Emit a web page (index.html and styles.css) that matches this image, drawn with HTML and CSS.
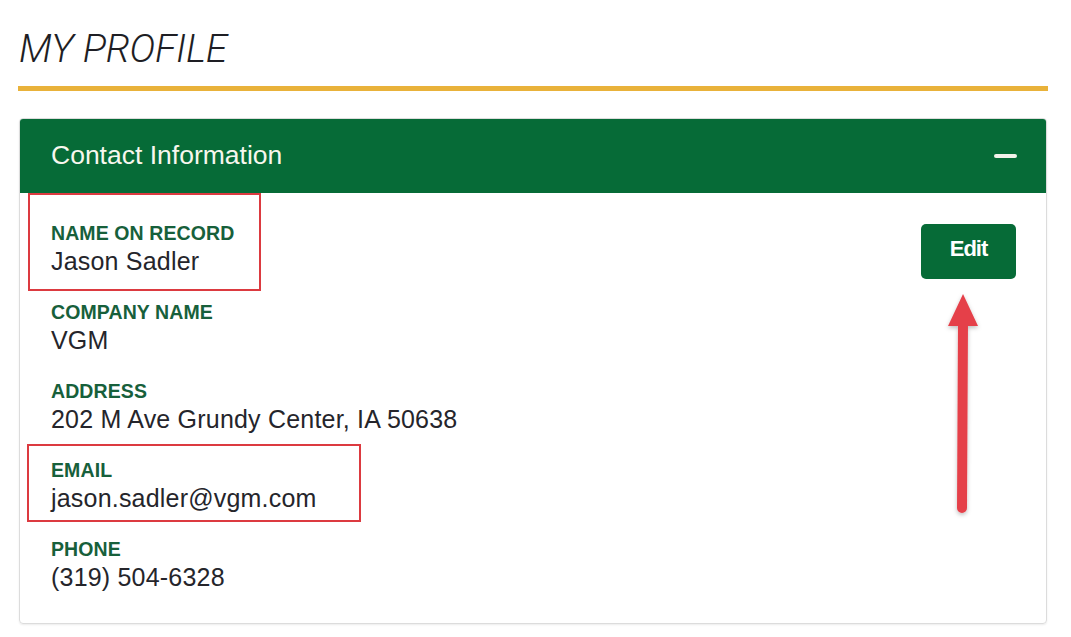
FILE: index.html
```html
<!DOCTYPE html>
<html lang="en">
<head>
<meta charset="utf-8">
<title>My Profile</title>
<link rel="stylesheet" href="styles.css">
</head>
<body>
<main class="page">
  <h1 class="page-title">MY PROFILE</h1>
  <div class="gold-rule"></div>
  <section class="card">
    <header class="card-header">
      <h2 class="card-title">Contact Information</h2>
      <span class="collapse-icon" aria-label="Collapse"></span>
    </header>
    <div class="card-body">
      <dl class="fields">
        <div class="field">
          <dt class="field-label">NAME ON RECORD</dt>
          <dd class="field-value">Jason Sadler</dd>
        </div>
        <div class="field">
          <dt class="field-label">COMPANY NAME</dt>
          <dd class="field-value">VGM</dd>
        </div>
        <div class="field">
          <dt class="field-label">ADDRESS</dt>
          <dd class="field-value">202 M Ave Grundy Center, IA 50638</dd>
        </div>
        <div class="field">
          <dt class="field-label">EMAIL</dt>
          <dd class="field-value">jason.sadler@vgm.com</dd>
        </div>
        <div class="field">
          <dt class="field-label">PHONE</dt>
          <dd class="field-value">(319) 504-6328</dd>
        </div>
      </dl>
      <button class="edit-btn" type="button">Edit</button>
    </div>
  </section>

  <div class="mark mark-name"></div>
  <div class="mark mark-email"></div>
  <svg class="arrow" width="46" height="232" viewBox="0 0 46 232" aria-hidden="true">
    <defs>
      <filter id="sh" x="-50%" y="-10%" width="200%" height="120%">
        <feDropShadow dx="0" dy="2" stdDeviation="2" flood-color="#000" flood-opacity="0.25"/>
      </filter>
    </defs>
    <g filter="url(#sh)">
      <line x1="23" y1="34" x2="22" y2="220" stroke="#e5414a" stroke-width="10" stroke-linecap="round"/>
      <polygon points="23,6 8,38 38,38" fill="#e5414a"/>
    </g>
  </svg>
</main>
</body>
</html>
```

FILE: styles.css
```css
* { box-sizing: border-box; }

html, body {
  margin: 0;
  padding: 0;
  background: #ffffff;
}

body {
  font-family: "Liberation Sans", Arial, sans-serif;
  color: #222222;
}

.page {
  position: relative;
  width: 1071px;
  height: 637px;
  padding: 23px 24px 0 19px;
}

.page-title {
  margin: 0;
  font-family: Roboto, "Liberation Sans", Arial, sans-serif;
  font-size: 39px;
  line-height: 52px;
  font-weight: 300;
  font-style: italic;
  color: #1e1e24;
  letter-spacing: -0.2px;
}

.gold-rule {
  margin: 11px 0 0 -1px;
  width: 1030px;
  height: 5px;
  background: #e9b23a;
}

.card {
  margin-top: 27px;
  width: 1028px;
  border: 1px solid #dcdcdc;
  border-radius: 4px;
  box-shadow: 0 1px 2px rgba(0, 0, 0, 0.08);
  overflow: hidden;
}

.card-header {
  display: flex;
  align-items: center;
  justify-content: space-between;
  height: 75px;
  margin: -1px -1px 0 -1px;
  padding: 0 30px 0 32px;
  background: #066b37;
  border-radius: 4px 4px 0 0;
}

.card-title {
  margin: 0;
  font-size: 26.5px;
  font-weight: 400;
  color: #f7f7ee;
}

.collapse-icon {
  display: block;
  width: 23px;
  height: 4px;
  border-radius: 2px;
  background: #f2f2ea;
}

.card-body {
  display: flex;
  justify-content: space-between;
  align-items: flex-start;
  padding: 27px 30px 31px 31px;
}

.fields {
  margin: 0;
  display: flex;
  flex-direction: column;
  gap: 23px;
}

.field {
  display: flex;
  flex-direction: column;
}

.field-label {
  font-size: 19.5px;
  line-height: 26px;
  font-weight: 700;
  color: #17603b;
  letter-spacing: 0.1px;
}

.field-value {
  margin: 0;
  font-size: 25px;
  line-height: 30px;
  font-weight: 400;
  color: #25252b;
  letter-spacing: 0.2px;
}

.edit-btn {
  margin-top: 4px;
  width: 95px;
  height: 55px;
  border: none;
  border-radius: 5px;
  background: #066b37;
  color: #ffffff;
  font-family: "Liberation Sans", Arial, sans-serif;
  font-size: 22px;
  font-weight: 700;
  letter-spacing: -1px;
  padding: 0 0 5px 0;
}

.mark {
  position: absolute;
  border: 2px solid #dc3a40;
}

.mark-name {
  left: 28px;
  top: 193px;
  width: 233px;
  height: 98px;
}

.mark-email {
  left: 27px;
  top: 444px;
  width: 334px;
  height: 78px;
}

.arrow {
  position: absolute;
  left: 940px;
  top: 288px;
}
```
